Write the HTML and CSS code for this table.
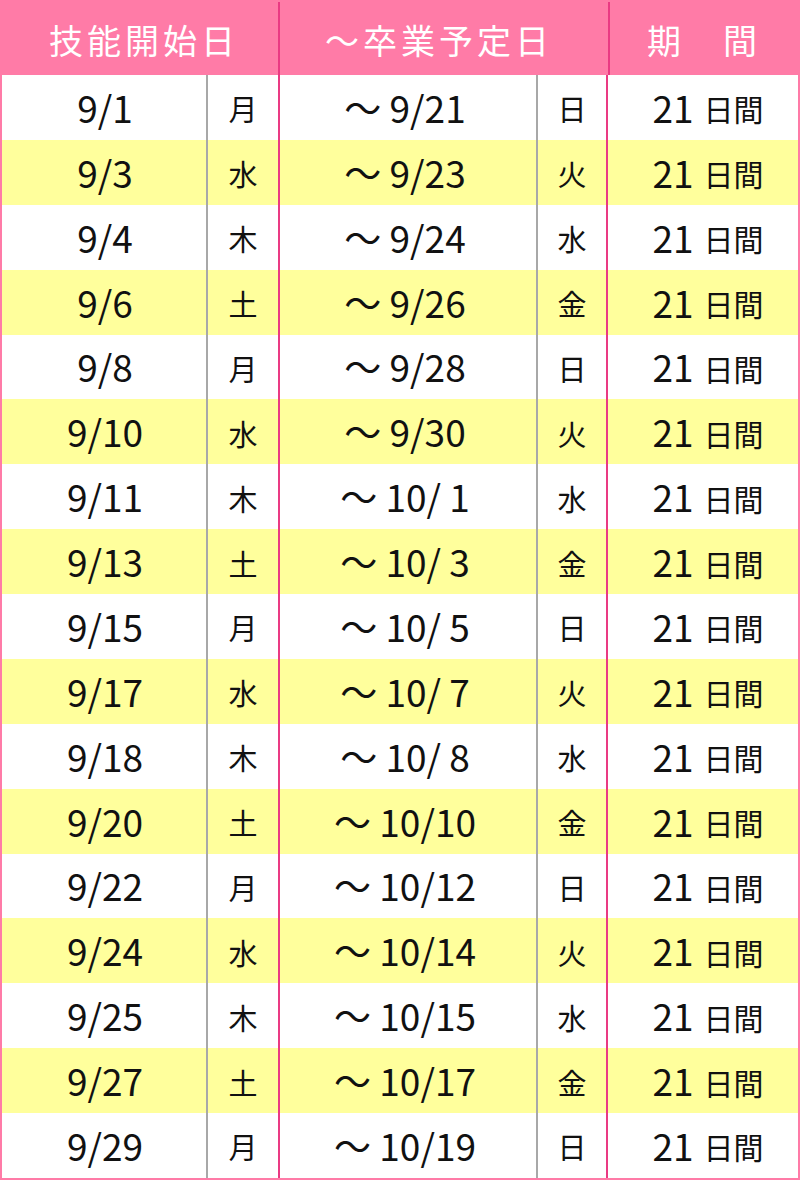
FILE: index.html
```html
<!DOCTYPE html>
<html lang="ja">
<head>
<meta charset="utf-8">
<title>技能開始日</title>
<link rel="stylesheet" href="styles.css">
</head>
<body>
<div class="sched">
  <div class="head">
    <div class="hcell h1">技能開始日</div>
    <div class="hcell h2">～卒業予定日</div>
    <div class="hcell h3">期　間</div>
  </div>
  <div class="row"><div class="c date">9/1</div><div class="c dow">月</div><div class="c end">～ 9/21</div><div class="c dow d2">日</div><div class="c per"><span class="n">21</span><span class="u">日間</span></div></div>
  <div class="row alt"><div class="c date">9/3</div><div class="c dow">水</div><div class="c end">～ 9/23</div><div class="c dow d2">火</div><div class="c per"><span class="n">21</span><span class="u">日間</span></div></div>
  <div class="row"><div class="c date">9/4</div><div class="c dow">木</div><div class="c end">～ 9/24</div><div class="c dow d2">水</div><div class="c per"><span class="n">21</span><span class="u">日間</span></div></div>
  <div class="row alt"><div class="c date">9/6</div><div class="c dow">土</div><div class="c end">～ 9/26</div><div class="c dow d2">金</div><div class="c per"><span class="n">21</span><span class="u">日間</span></div></div>
  <div class="row"><div class="c date">9/8</div><div class="c dow">月</div><div class="c end">～ 9/28</div><div class="c dow d2">日</div><div class="c per"><span class="n">21</span><span class="u">日間</span></div></div>
  <div class="row alt"><div class="c date">9/10</div><div class="c dow">水</div><div class="c end">～ 9/30</div><div class="c dow d2">火</div><div class="c per"><span class="n">21</span><span class="u">日間</span></div></div>
  <div class="row"><div class="c date">9/11</div><div class="c dow">木</div><div class="c end">～ 10/ 1</div><div class="c dow d2">水</div><div class="c per"><span class="n">21</span><span class="u">日間</span></div></div>
  <div class="row alt"><div class="c date">9/13</div><div class="c dow">土</div><div class="c end">～ 10/ 3</div><div class="c dow d2">金</div><div class="c per"><span class="n">21</span><span class="u">日間</span></div></div>
  <div class="row"><div class="c date">9/15</div><div class="c dow">月</div><div class="c end">～ 10/ 5</div><div class="c dow d2">日</div><div class="c per"><span class="n">21</span><span class="u">日間</span></div></div>
  <div class="row alt"><div class="c date">9/17</div><div class="c dow">水</div><div class="c end">～ 10/ 7</div><div class="c dow d2">火</div><div class="c per"><span class="n">21</span><span class="u">日間</span></div></div>
  <div class="row"><div class="c date">9/18</div><div class="c dow">木</div><div class="c end">～ 10/ 8</div><div class="c dow d2">水</div><div class="c per"><span class="n">21</span><span class="u">日間</span></div></div>
  <div class="row alt"><div class="c date">9/20</div><div class="c dow">土</div><div class="c end">～ 10/10</div><div class="c dow d2">金</div><div class="c per"><span class="n">21</span><span class="u">日間</span></div></div>
  <div class="row"><div class="c date">9/22</div><div class="c dow">月</div><div class="c end">～ 10/12</div><div class="c dow d2">日</div><div class="c per"><span class="n">21</span><span class="u">日間</span></div></div>
  <div class="row alt"><div class="c date">9/24</div><div class="c dow">水</div><div class="c end">～ 10/14</div><div class="c dow d2">火</div><div class="c per"><span class="n">21</span><span class="u">日間</span></div></div>
  <div class="row"><div class="c date">9/25</div><div class="c dow">木</div><div class="c end">～ 10/15</div><div class="c dow d2">水</div><div class="c per"><span class="n">21</span><span class="u">日間</span></div></div>
  <div class="row alt"><div class="c date">9/27</div><div class="c dow">土</div><div class="c end">～ 10/17</div><div class="c dow d2">金</div><div class="c per"><span class="n">21</span><span class="u">日間</span></div></div>
  <div class="row"><div class="c date">9/29</div><div class="c dow">月</div><div class="c end">～ 10/19</div><div class="c dow d2">日</div><div class="c per"><span class="n">21</span><span class="u">日間</span></div></div>
</div>
</body>
</html>
```

FILE: styles.css
```css
html, body {
  margin: 0;
  padding: 0;
  background: #ffffff;
}

.sched {
  width: 800px;
  height: 1180px;
  box-sizing: border-box;
  border: 2px solid #ff7ba7;
  font-family: "Noto Sans CJK JP", "Noto Sans", sans-serif;
  color: #111111;
  display: flex;
  flex-direction: column;
  overflow: hidden;
}

.head {
  display: grid;
  grid-template-columns: 276px 330px 190px;
  height: 73px;
  flex: none;
  background: #ff7ba7;
}

.hcell {
  display: flex;
  align-items: center;
  justify-content: center;
  color: #ffffff;
  font-size: 34px;
  line-height: 1;
  letter-spacing: 4px;
  padding-top: 2px;
}

.h1 {
  padding-left: 8px;
}

.h2,
.h3 {
  border-left: 2px solid #ea3a83;
}

.h2 {
  padding-right: 10px;
}

.row {
  display: grid;
  grid-template-columns: 204px 72px 258px 70px 192px;
  flex: 1 1 0;
  min-height: 0;
  background: #ffffff;
}

.row.alt {
  background: #ffff9c;
}

.c {
  display: flex;
  align-items: center;
  justify-content: center;
  line-height: 1;
  white-space: pre;
}

.date,
.end {
  font-size: 37px;
}

.date {
  padding-left: 2px;
}

.dow {
  font-size: 29px;
  border-left: 2px solid #a8a8a8;
  padding-top: 3px;
}

.dow.d2 {
  border-left-color: #a8a8a8;
}

.end {
  border-left: 2px solid #ea3a83;
  padding-right: 6px;
}

.per {
  border-left: 2px solid #ea3a83;
  gap: 10px;
  padding-left: 10px;
}

.per .n {
  font-size: 37px;
}

.per .u {
  font-size: 30px;
  position: relative;
  top: 1px;
}
```
